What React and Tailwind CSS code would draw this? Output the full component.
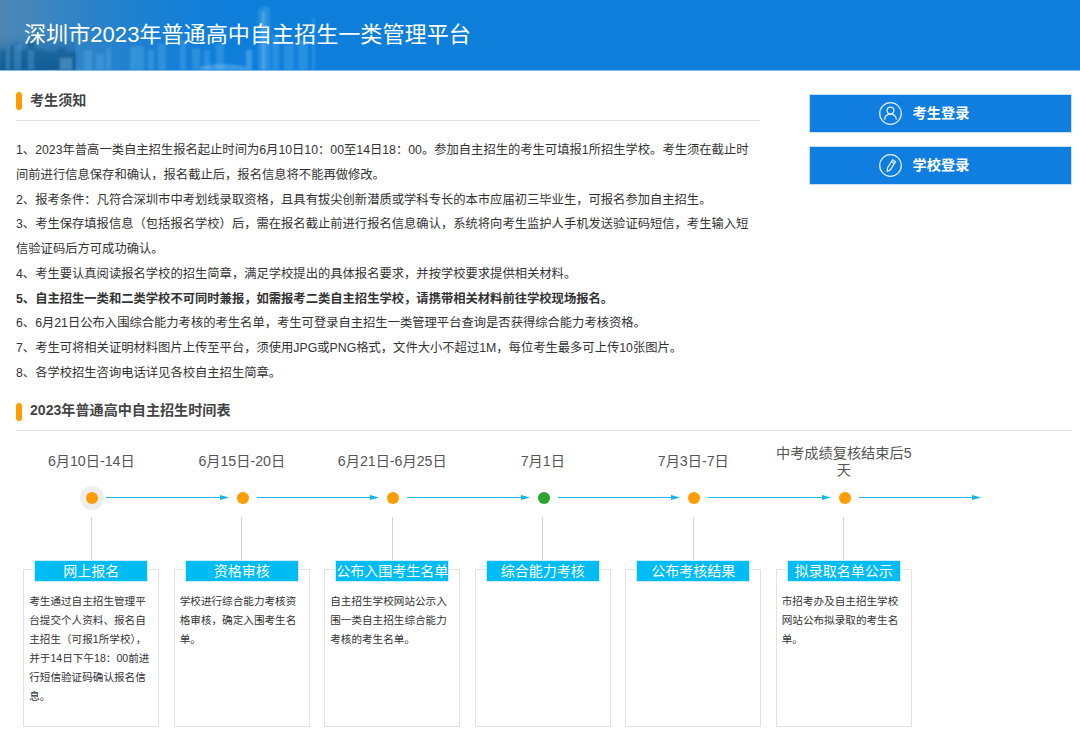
const font = { fontFamily: '"Liberation Sans", "Noto Sans CJK SC", sans-serif' };

const notices = [
  { text: "1、2023年普高一类自主招生报名起止时间为6月10日10：00至14日18：00。参加自主招生的考生可填报1所招生学校。考生须在截止时间前进行信息保存和确认，报名截止后，报名信息将不能再做修改。" },
  { text: "2、报考条件：凡符合深圳市中考划线录取资格，且具有拔尖创新潜质或学科专长的本市应届初三毕业生，可报名参加自主招生。" },
  { text: "3、考生保存填报信息（包括报名学校）后，需在报名截止前进行报名信息确认，系统将向考生监护人手机发送验证码短信，考生输入短信验证码后方可成功确认。" },
  { text: "4、考生要认真阅读报名学校的招生简章，满足学校提出的具体报名要求，并按学校要求提供相关材料。" },
  { text: "5、自主招生一类和二类学校不可同时兼报，如需报考二类自主招生学校，请携带相关材料前往学校现场报名。", bold: true },
  { text: "6、6月21日公布入围综合能力考核的考生名单，考生可登录自主招生一类管理平台查询是否获得综合能力考核资格。" },
  { text: "7、考生可将相关证明材料图片上传至平台，须使用JPG或PNG格式，文件大小不超过1M，每位考生最多可上传10张图片。" },
  { text: "8、各学校招生咨询电话详见各校自主招生简章。" },
];

const steps = [
  { date: "6月10日-14日", title: "网上报名", desc: "考生通过自主招生管理平台提交个人资料、报名自主招生（可报1所学校），并于14日下午18：00前进行短信验证码确认报名信息。", halo: true },
  { date: "6月15日-20日", title: "资格审核", desc: "学校进行综合能力考核资格审核，确定入围考生名单。" },
  { date: "6月21日-6月25日", title: "公布入围考生名单", desc: "自主招生学校网站公示入围一类自主招生综合能力考核的考生名单。" },
  { date: "7月1日", title: "综合能力考核", desc: "", green: true },
  { date: "7月3日-7日", title: "公布考核结果", desc: "" },
  { date: "中考成绩复核结束后5天", title: "拟录取名单公示", desc: "市招考办及自主招生学校网站公布拟录取的考生名单。" },
];

function SectionTitle({ children }) {
  return (
    <div className="flex items-center gap-2 h-[18px]">
      <span className="w-[6px] h-[18px] rounded-[3px] bg-[#ff9c00]" />
      <h2 className="text-[14.1px] font-bold text-[#444] -mt-px">{children}</h2>
    </div>
  );
}

// blurred city photo behind the title
function Skyline() {
  return (
    <svg className="absolute inset-0 w-full h-full" viewBox="0 0 1080 70" preserveAspectRatio="none">
      <defs>
        <linearGradient id="fade" x1="0" x2="1" y1="0" y2="0">
          <stop offset="0" stopColor="#5f8aa8" stopOpacity="0.8" />
          <stop offset="0.1" stopColor="#3f86bd" stopOpacity="0.5" />
          <stop offset="0.24" stopColor="#0e7edb" stopOpacity="0" />
        </linearGradient>
        <linearGradient id="low" x1="0" x2="0" y1="0" y2="1">
          <stop offset="0.5" stopColor="#0d5c96" stopOpacity="0" />
          <stop offset="1" stopColor="#0d5c96" stopOpacity="0.85" />
        </linearGradient>
        <filter id="soft">
          <feGaussianBlur stdDeviation="0.8" />
        </filter>
      </defs>
      <rect width="1080" height="70" fill="url(#fade)" />
      <rect width="75" height="70" fill="url(#low)" />
      <g filter="url(#soft)">
        <g fill="#0f5a92" opacity="0.6">
          <path d="M0 50h6v-4h8v-3h5v7h8v-8h8v8h10v2h12v-4h9v4h10v18H0z" />
        </g>
        <g fill="#5fb4ea" opacity="0.32">
          <path d="M6 70V46h4v24zM14 70V44h7v26zM28 70V50h6v20z" />
          <path d="M84 70V50h8v20zM96 70V54h8v16zM106 70V48h5v22z" />
          <path d="M130 70V46h14v24zM148 70V50h6v20zM158 70V44h8v26z" />
          <path d="M180 70V40h6v30zM192 70V48h8v22zM204 70V50h6v20zM216 70V44h8v26z" />
          <path d="M258 70V10l5-4 7 2v62zM272 70V34h7v36zM284 70V44h10v26zM298 70V40h10v30zM312 70V18h3v52z" />
        </g>
        <g fill="#a5dcf8" opacity="0.3">
          <path d="M60 70V58h12v12zM200 70v-3q22-6 48 0v3zM246 70V50h6v20zM262 70V12h3v58z" />
        </g>
      </g>
    </svg>
  );
}

function LoginButton({ label, children }) {
  return (
    <button className="h-[39px] flex items-center justify-center gap-[11px] pr-[33px] bg-[#0f7ee0] border border-[#c6dff5] text-white text-[14.2px] font-bold">
      <svg width="23" height="23" viewBox="0 0 23 23" fill="none" stroke="#e0effc" strokeWidth="1.25">
        <circle cx="11.5" cy="11.5" r="10.8" />
        {children}
      </svg>
      <span>{label}</span>
    </button>
  );
}

function Arrow() {
  return (
    <div className="flex-1 flex items-center">
      <div className="flex-1 h-px bg-[#1fb6ee]" />
      <svg width="9" height="5" viewBox="0 0 9 5" className="block -ml-px">
        <path d="M0 0l9 2.5L0 5z" fill="#10b5f0" />
      </svg>
    </div>
  );
}

export default function App() {
  return (
    <div className="w-[1080px] h-[741px] overflow-hidden bg-white text-[#333]" style={font}>
      <header className="relative h-[71px] bg-[#0e7edb] border-b border-[#7dbcee] flex items-center pl-6">
        <Skyline />
        <h1 className="relative text-[22.1px] text-white">深圳市2023年普通高中自主招生一类管理平台</h1>
      </header>

      <div className="flex pl-4 pr-2 pt-[21px]">
        <div className="w-[744px]">
          <SectionTitle>考生须知</SectionTitle>
          <div className="mt-[10px] h-px bg-[#e2e2e2]" />
          <div className="mt-[17px] w-[737px] text-[12.3px] leading-[24.75px] text-[#333]">
            {notices.map((n) => (
              <p key={n.text} className={n.bold ? "font-bold" : ""}>{n.text}</p>
            ))}
          </div>
        </div>
        <div className="ml-[49px] w-[263px] flex flex-col gap-[13px] pt-[2px]">
          <LoginButton label="考生登录">
            <circle cx="11.5" cy="8.6" r="3.4" />
            <path d="M5.6 17.6c.4-3.6 2.6-5.4 5.9-5.4s5.5 1.8 5.9 5.4" />
          </LoginButton>
          <LoginButton label="学校登录">
            <path d="M13.6 5.8l2.9 1.9-5.2 8.2-3 1.3.2-3.2z" />
            <path d="M12.5 7.6l2.9 1.9" />
          </LoginButton>
        </div>
      </div>

      <section className="pl-4 pr-2 mt-[17px]">
        <SectionTitle>2023年普通高中自主招生时间表</SectionTitle>
        <div className="mt-[9px] h-px bg-[#e2e2e2]" />

        {/* dates */}
        <div className="flex h-[32px] mt-[15px] items-center">
          {steps.map((s) => (
            <div key={s.date} className="w-[150.5px] flex justify-center">
              <p className="w-[136px] text-center text-[14.2px] leading-[17px] text-[#555]">{s.date}</p>
            </div>
          ))}
        </div>

        {/* dots and arrows */}
        <div className="flex h-[28px] mt-[6px] pl-[62px]">
          {steps.map((s) => (
            <div key={s.title} className="w-[150.5px] flex items-center">
              <div className="w-7 h-7 flex items-center justify-center">
                <div className={`w-[24px] h-[24px] rounded-full flex items-center justify-center ${s.halo ? "bg-[#eeeeee]" : ""}`}>
                  <div className={`w-[12px] h-[12px] rounded-full ${s.green ? "bg-[#2aa52e]" : "bg-[#ff9c00]"}`} />
                </div>
              </div>
              <Arrow />
            </div>
          ))}
        </div>

        {/* cards */}
        <div className="flex mt-[5px]">
          {steps.map((s) => (
            <div key={s.title} className="w-[150.5px] flex flex-col items-center">
              <div className="w-px h-[43px] bg-[#d4d4d4]" />
              <div className="relative w-[136px] h-[158px] mt-[9px] border border-[#e3e3e3] flex flex-col items-center">
                <div className="w-[114px] h-[22px] -mt-[10px] bg-[#00bcf5] border border-[#cdeefb] text-white text-[14px] leading-[20px] text-center whitespace-nowrap">
                  {s.title}
                </div>
                <p className="self-start w-[122px] ml-[5px] mt-[10px] text-[10.6px] leading-[19px] text-[#333]">{s.desc}</p>
              </div>
            </div>
          ))}
        </div>
      </section>
    </div>
  );
}
